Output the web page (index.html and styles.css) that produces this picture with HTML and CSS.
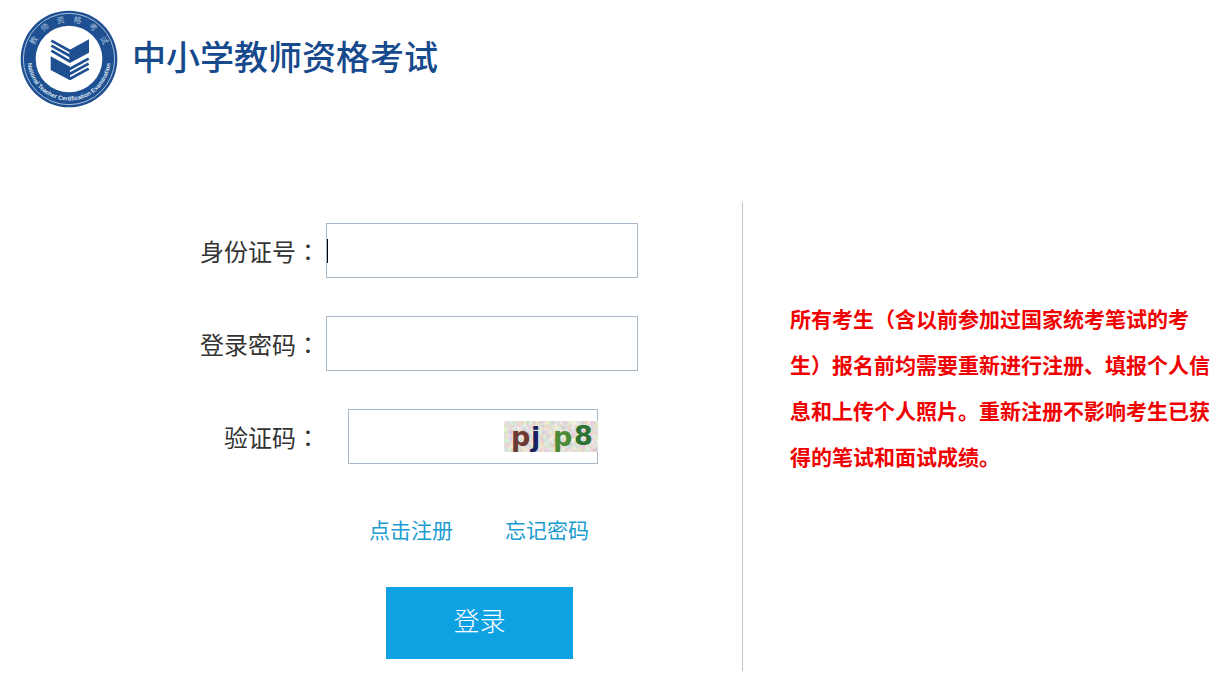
FILE: index.html
```html
<!DOCTYPE html>
<html lang="zh-CN">
<head>
<meta charset="utf-8">
<title>中小学教师资格考试</title>
<meta name="viewport" content="width=device-width, initial-scale=1">
<link rel="stylesheet" href="styles.css">
</head>
<body>
<header class="header">
  <svg class="logo" viewBox="30 30 294 294" role="img" aria-label="National Teacher Certification Examination">
    <defs>
      <path id="arc-top" d="M66 177a111 111 0 0 1 222 0"/>
      <path id="arc-bottom" d="M52 177a125 125 0 0 0 250 0"/>
    </defs>
    <circle cx="177" cy="177" r="145" fill="#1d4f91"/>
    <circle cx="177" cy="177" r="137" fill="none" stroke="#a9c0dc" stroke-width="3"/>
    <circle cx="177" cy="177" r="100" fill="#fff"/>
    <text class="logo-cn"><textPath href="#arc-top" startOffset="50%" text-anchor="middle">教　师　资　格　考　试</textPath></text>
    <text class="logo-en"><textPath href="#arc-bottom" startOffset="50%" text-anchor="middle">National Teacher Certification Examination</textPath></text>
    <g fill="#1d4f91">
      <path d="M178 150l59-32v40l-59 32z"/>
      <path d="M122 169l58 31v41l-58-31z"/>
    </g>
    <g stroke="#1d4f91" stroke-width="8" fill="none">
      <path d="M124 122l56 31M124 137l56 31M124 152l56 33"/>
      <path d="M179 207l57-31M179 222l57-31M179 237l57-31"/>
    </g>
  </svg>
  <h1 class="site-title">中小学教师资格考试</h1>
</header>
<main class="main">
  <section class="login">
    <form class="form">
      <label class="label" for="idno">身份证号<span class="colon" lang="zh-TW">：</span></label>
      <div class="field">
        <input class="input" id="idno" type="text">
        <span class="caret"></span>
      </div>
      <label class="label" for="pwd">登录密码<span class="colon" lang="zh-TW">：</span></label>
      <div class="field"><input class="input" id="pwd" type="password"></div>
      <label class="label" for="code">验证码<span class="colon" lang="zh-TW">：</span></label>
      <div class="field field-code">
        <input class="input" id="code" type="text">
        <svg class="captcha" viewBox="0 0 94 31" role="img" aria-label="pj p8">
          <defs>
            <filter id="grain" x="0" y="0" width="100%" height="100%">
              <feTurbulence type="fractalNoise" baseFrequency="0.22" numOctaves="2" seed="4"/>
              <feColorMatrix values="0.6 0 0 0 0.48  0 0.6 0 0 0.44  0 0 0.6 0 0.38  0 0 0 0 1"/>
            </filter>
          </defs>
          <rect width="94" height="31" filter="url(#grain)"/>
          <text class="code-char" x="7" y="25" fill="#6b3a32">p</text>
          <text class="code-char" x="27" y="25" fill="#18215f">j</text>
          <text class="code-char" x="49" y="25" fill="#4c8a35">p</text>
          <text class="code-char" x="70" y="24" fill="#2b7233">8</text>
        </svg>
      </div>
      <div class="links">
        <a href="#register">点击注册</a>
        <a href="#forgot">忘记密码</a>
      </div>
      <button class="submit" type="submit">登录</button>
    </form>
  </section>
  <aside class="notice">
    <p class="notice-text">所有考生（含以前参加过国家统考笔试的考生）报名前均需要重新进行注册、填报个人信息和上传个人照片。重新注册不影响考生已获得的笔试和面试成绩。</p>
  </aside>
</main>
</body>
</html>
```
FILE: styles.css
```css
* {
  box-sizing: border-box;
}

body {
  margin: 0;
  background: #fff;
  color: #333;
  font-family: "Noto Sans CJK SC", sans-serif;
}

.header {
  display: flex;
  align-items: center;
  gap: 14px;
  padding: 10px 20px 0;
}

.logo {
  width: 98px;
  height: 98px;
}

.logo-cn {
  fill: #a9c0dc;
  font-size: 24px;
}

.logo-en {
  fill: #dfe8f3;
  font-family: "Liberation Sans", sans-serif;
  font-size: 18px;
  font-weight: bold;
}

.site-title {
  margin: 0;
  padding-bottom: 6px;
  color: #164a8c;
  font-size: 34px;
  font-weight: 500;
  line-height: 48px;
}

.main {
  display: grid;
  grid-template-columns: minmax(0, 743fr) minmax(0, 478fr);
  margin-top: 94px;
}

.login {
  display: flex;
  justify-content: flex-end;
  padding: 21px 104px 12px 0;
  border-right: 1px solid #c4c4c4;
}

.form {
  display: grid;
  grid-template-columns: 120px 312px;
  column-gap: 6px;
  row-gap: 38px;
  align-items: center;
}

.label {
  font-size: 24px;
  line-height: 36px;
  text-align: right;
  white-space: nowrap;
}

.colon {
  font-family: "Noto Sans CJK TC", sans-serif;
}

.field {
  position: relative;
}

.field-code {
  width: 250px;
  margin-left: 22px;
}

.input {
  display: block;
  width: 100%;
  height: 55px;
  padding: 0 8px;
  border: 1px solid #a9b8c6;
  border-radius: 0;
  background: #fff;
  font: inherit;
  font-size: 24px;
  outline: none;
}

.caret {
  position: absolute;
  top: 16px;
  left: 1px;
  width: 1px;
  height: 24px;
  background: #000;
}

.captcha {
  position: absolute;
  top: 12px;
  right: 0;
  width: 94px;
  height: 31px;
}

.code-char {
  font-family: "DejaVu Sans", sans-serif;
  font-size: 27px;
  font-weight: bold;
}

.links {
  grid-column: 2;
  display: flex;
  gap: 52px;
  padding: 10px 0 3px 43px;
  font-size: 21px;
  line-height: 34px;
}

.links a {
  color: #1a9cd0;
  text-decoration: none;
}

.submit {
  grid-column: 2;
  width: 187px;
  height: 72px;
  margin-left: 60px;
  padding: 0 0 8px;
  border: 0;
  background: #0fa2e3;
  color: #fff;
  font: inherit;
  font-size: 26px;
  font-weight: 300;
}

.notice {
  padding: 93px 10px 0 47px;
}

.notice-text {
  margin: 0;
  color: #f00000;
  font-size: 21px;
  font-weight: bold;
  line-height: 46px;
}
```
